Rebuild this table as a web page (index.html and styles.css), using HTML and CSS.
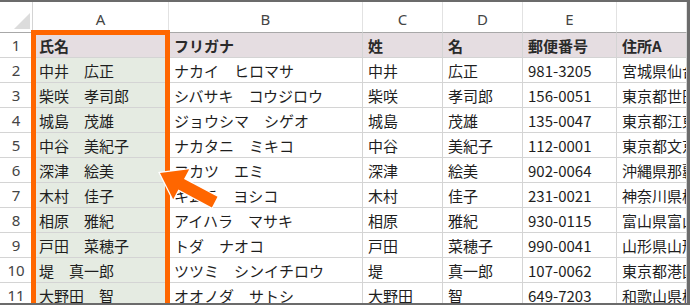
FILE: index.html
```html
<!DOCTYPE html>
<html lang="ja">
<head>
<meta charset="utf-8">
<link rel="stylesheet" href="styles.css">
</head>
<body>
<div class="sheet">
  <div class="row colhead">
    <div class="cell corner"><span class="tri"></span></div>
    <div class="cell">A</div>
    <div class="cell">B</div>
    <div class="cell">C</div>
    <div class="cell">D</div>
    <div class="cell">E</div>
    <div class="cell"></div>
  </div>
  <div class="row head">
    <div class="cell rh">1</div>
    <div class="cell a">氏名</div>
    <div class="cell">フリガナ</div>
    <div class="cell">姓</div>
    <div class="cell">名</div>
    <div class="cell">郵便番号</div>
    <div class="cell">住所A</div>
  </div>
  <div class="row"><div class="cell rh">2</div><div class="cell a sel">中井　広正</div><div class="cell">ナカイ　ヒロマサ</div><div class="cell">中井</div><div class="cell">広正</div><div class="cell">981-3205</div><div class="cell">宮城県仙台市泉区</div></div>
  <div class="row"><div class="cell rh">3</div><div class="cell a sel">柴咲　孝司郎</div><div class="cell">シバサキ　コウジロウ</div><div class="cell">柴咲</div><div class="cell">孝司郎</div><div class="cell">156-0051</div><div class="cell">東京都世田谷区</div></div>
  <div class="row"><div class="cell rh">4</div><div class="cell a sel">城島　茂雄</div><div class="cell">ジョウシマ　シゲオ</div><div class="cell">城島</div><div class="cell">茂雄</div><div class="cell">135-0047</div><div class="cell">東京都江東区</div></div>
  <div class="row"><div class="cell rh">5</div><div class="cell a sel">中谷　美紀子</div><div class="cell">ナカタニ　ミキコ</div><div class="cell">中谷</div><div class="cell">美紀子</div><div class="cell">112-0001</div><div class="cell">東京都文京区</div></div>
  <div class="row"><div class="cell rh">6</div><div class="cell a sel">深津　絵美</div><div class="cell">フカツ　エミ</div><div class="cell">深津</div><div class="cell">絵美</div><div class="cell">902-0064</div><div class="cell">沖縄県那覇市</div></div>
  <div class="row"><div class="cell rh">7</div><div class="cell a sel">木村　佳子</div><div class="cell">キムラ　ヨシコ</div><div class="cell">木村</div><div class="cell">佳子</div><div class="cell">231-0021</div><div class="cell">神奈川県横浜市</div></div>
  <div class="row"><div class="cell rh">8</div><div class="cell a sel">相原　雅紀</div><div class="cell">アイハラ　マサキ</div><div class="cell">相原</div><div class="cell">雅紀</div><div class="cell">930-0115</div><div class="cell">富山県富山市</div></div>
  <div class="row"><div class="cell rh">9</div><div class="cell a sel">戸田　菜穂子</div><div class="cell">トダ　ナオコ</div><div class="cell">戸田</div><div class="cell">菜穂子</div><div class="cell">990-0041</div><div class="cell">山形県山形市</div></div>
  <div class="row"><div class="cell rh">10</div><div class="cell a sel">堤　真一郎</div><div class="cell">ツツミ　シンイチロウ</div><div class="cell">堤</div><div class="cell">真一郎</div><div class="cell">107-0062</div><div class="cell">東京都港区</div></div>
  <div class="row"><div class="cell rh">11</div><div class="cell a sel">大野田　智</div><div class="cell">オオノダ　サトシ</div><div class="cell">大野田</div><div class="cell">智</div><div class="cell">649-7203</div><div class="cell">和歌山県橋本市</div></div>
  <div class="frame"></div>
  <svg class="arrow" width="690" height="305" viewBox="0 0 690 305">
    <polygon points="160,173 189.2,169.3 184,179 217.5,196.8 211.9,207.4 178.4,189.6 173.2,199.3" fill="#ff6600" stroke="#ffffff" stroke-width="2.5" stroke-linejoin="miter" paint-order="stroke"/>
  </svg>
</div>
</body>
</html>
```
FILE: styles.css
```css
html, body {
  margin: 0;
  padding: 0;
  background: #ffffff;
}
.sheet {
  position: relative;
  width: 690px;
  height: 305px;
  box-sizing: border-box;
  border-top: 2px solid #6b6b6b;
  border-right: 3px solid #6b6b6b;
  border-bottom: 2px solid #6b6b6b;
  overflow: hidden;
  font-family: "Noto Sans CJK JP", "Noto Sans", sans-serif;
  font-size: 15px;
  color: #1e1e1e;
}
.row {
  display: grid;
  grid-template-columns: 33px 136px 194px 80px 80px 94px 70px;
  height: 25px;
}
.cell {
  box-sizing: border-box;
  border-right: 1px solid #d4d4d4;
  border-bottom: 1px solid #d4d4d4;
  padding-left: 5px;
  display: flex;
  align-items: center;
  white-space: nowrap;
  overflow: hidden;
  line-height: 1;
}
.colhead {
  height: 31px;
}
.colhead .cell {
  justify-content: center;
  padding: 4px 0 0 0;
  font-family: "Noto Sans", "Liberation Sans", sans-serif;
  color: #444444;
  border-right-color: #e2e2e2;
  border-bottom-color: #a8a8a8;
}
.colhead .corner {
  justify-content: flex-end;
  align-items: flex-end;
  padding: 0 2px 3px 0;
  border-right-color: #d4d4d4;
}
.tri {
  width: 16px;
  height: 16px;
  background: #dcdcdc;
  clip-path: polygon(100% 0, 100% 100%, 0 100%);
}
.rh {
  justify-content: center;
  padding: 0;
  font-family: "Noto Sans", "Liberation Sans", sans-serif;
  color: #444444;
  border-right-color: #d4d4d4;
}
.a {
  padding-left: 6px;
}
.head .cell {
  background: #e5dde1;
  font-weight: bold;
  color: #2a2a2a;
}
.head .rh {
  background: #ffffff;
  font-weight: normal;
  color: #444444;
}
.sel {
  background: #e5ebe2;
}
.frame {
  position: absolute;
  left: 31px;
  top: 28px;
  width: 139px;
  height: 300px;
  box-sizing: border-box;
  border: 5px solid #ff6600;
}
.arrow {
  position: absolute;
  left: 0;
  top: -2px;
  pointer-events: none;
}
```
